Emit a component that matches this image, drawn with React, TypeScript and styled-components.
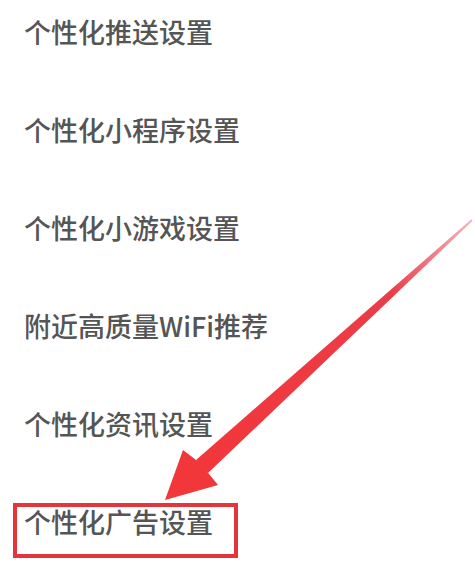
import React from "react";
import styled, { createGlobalStyle } from "styled-components";

const Global = createGlobalStyle`
  html, body { margin: 0; padding: 0; background: #ffffff; }
  body { width: 475px; height: 565px; overflow: hidden; }
`;

const Page = styled.div`
  position: relative;
  width: 475px;
  height: 565px;
  background: #ffffff;
  overflow: hidden;
`;

const List = styled.ul`
  list-style: none;
  margin: 0;
  padding: 18px 0 0 24px;
  display: flex;
  flex-direction: column;
  gap: 71px;
`;

const Item = styled.li`
  font-family: "Noto Sans CJK SC", "Noto Sans", sans-serif;
  font-size: 27px;
  line-height: 27px;
  height: 27px;
  font-weight: 500;
  color: #555555;
  white-space: nowrap;
`;

const Highlight = styled.div`
  position: absolute;
  left: 13px;
  top: 503px;
  width: 225px;
  height: 55px;
  box-sizing: border-box;
  border: 4px solid #e6343b;
`;

const ArrowSvg = styled.svg`
  position: absolute;
  left: 0;
  top: 0;
  pointer-events: none;
`;

const items = [
  "个性化推送设置",
  "个性化小程序设置",
  "个性化小游戏设置",
  "附近高质量WiFi推荐",
  "个性化资讯设置",
  "个性化广告设置",
];

export default function App() {
  return (
    <Page>
      <Global />
      <List>
        {items.map((t) => (
          <Item key={t}>{t}</Item>
        ))}
      </List>
      <Highlight />
      <ArrowSvg width="475" height="565" viewBox="0 0 475 565">
        <defs>
          <linearGradient id="shaft" x1="200" y1="467" x2="472" y2="220" gradientUnits="userSpaceOnUse">
            <stop offset="0" stopColor="#f2373a" />
            <stop offset="0.7" stopColor="#ea3d48" />
            <stop offset="1" stopColor="#f3b7c0" />
          </linearGradient>
        </defs>
        <polygon points="196,460 208,473 472.7,220.7 471.3,219.3" fill="url(#shaft)" />
        <polygon points="165,500 183,450 200,463 218,485" fill="#f2373a" />
      </ArrowSvg>
    </Page>
  );
}
